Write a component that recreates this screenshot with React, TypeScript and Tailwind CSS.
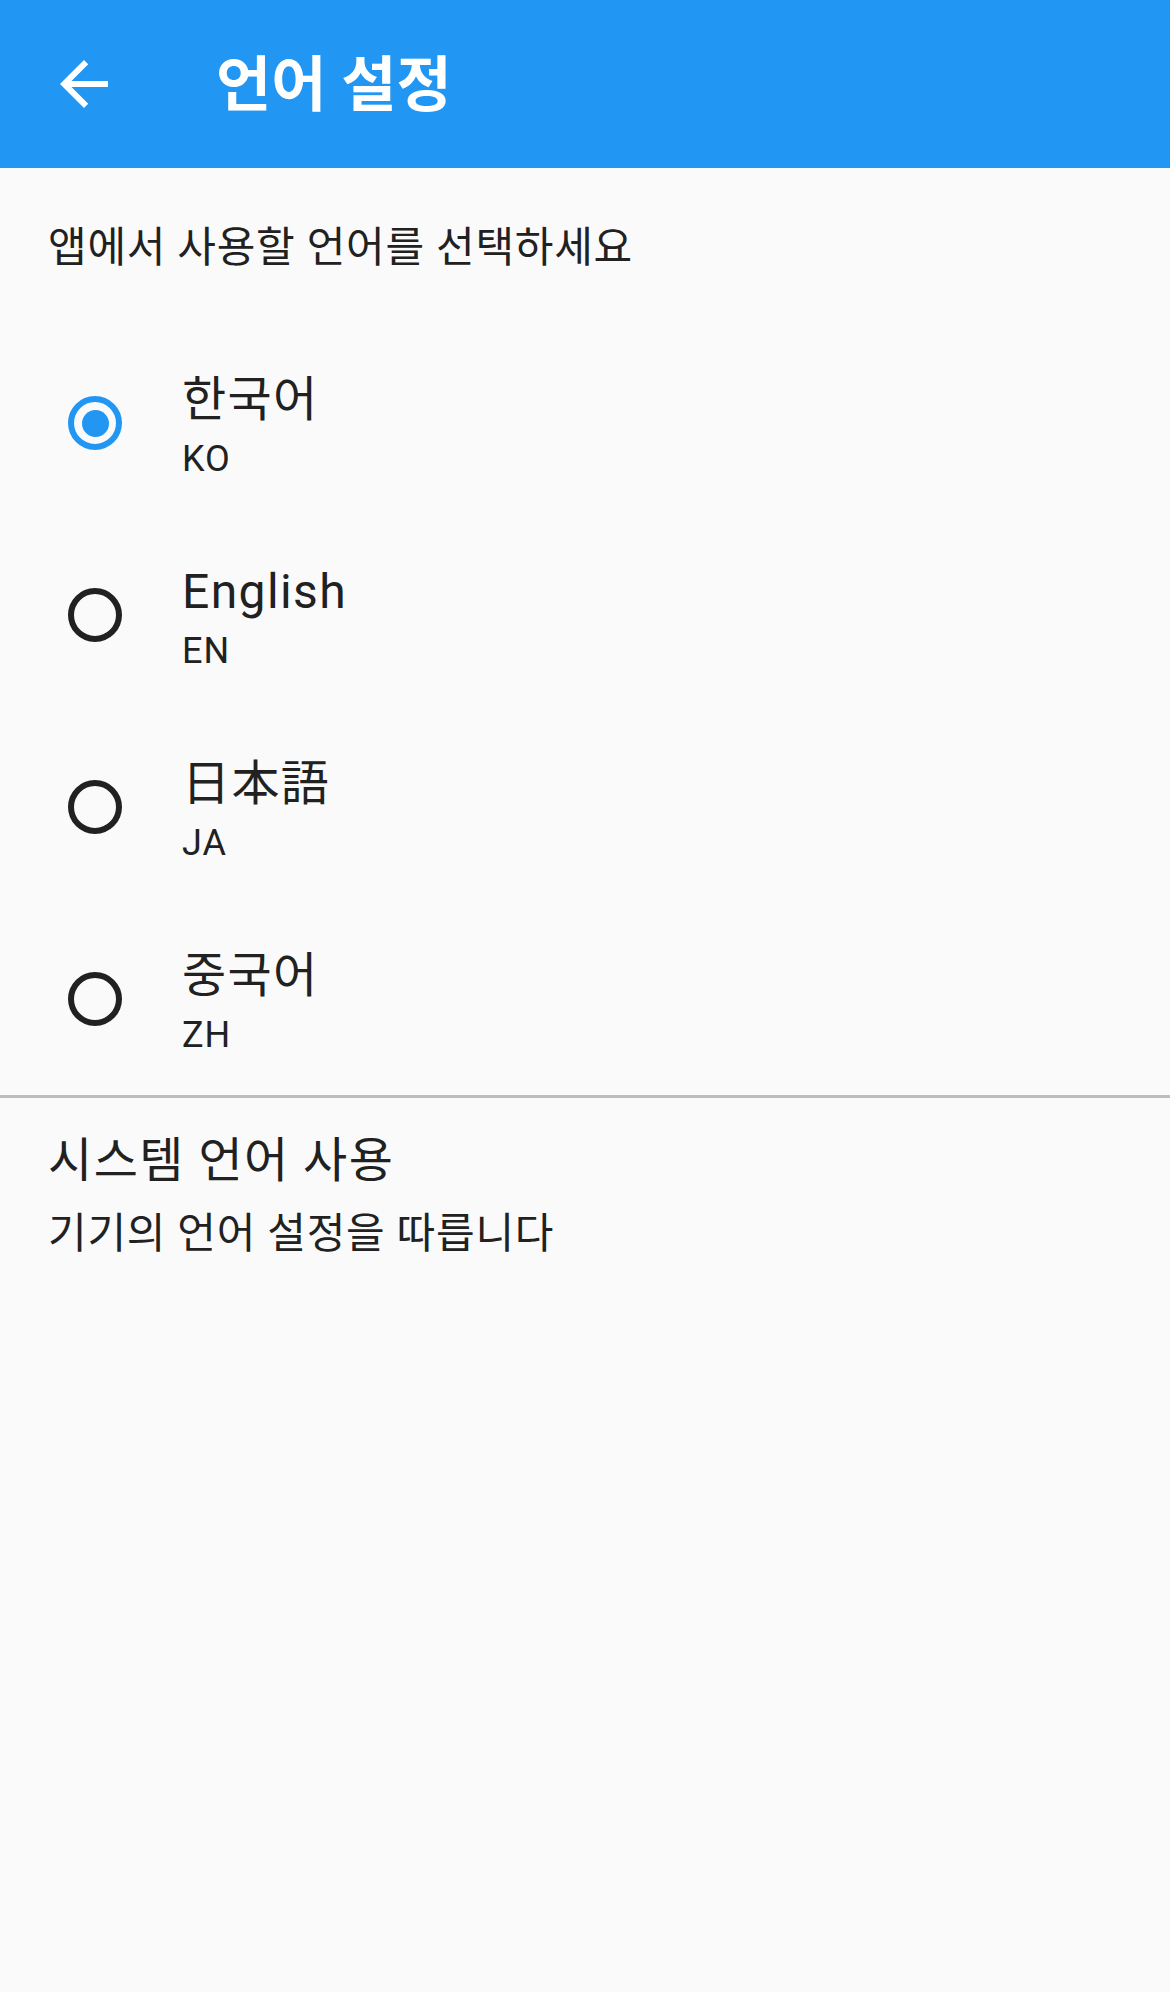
import React from "react";

const FONT = 'Roboto, "Noto Sans CJK KR", sans-serif';

type Lang = { name: string; code: string; jp?: boolean };

const langs: Lang[] = [
  { name: "한국어", code: "KO" },
  { name: "English", code: "EN" },
  { name: "日本語", code: "JA", jp: true },
  { name: "중국어", code: "ZH" },
];

function Radio({ checked }: { checked: boolean }) {
  if (checked) {
    return (
      <div className="w-[54px] h-[54px] rounded-full border-[6px] border-[#2196F3] flex items-center justify-center">
        <div className="w-[27px] h-[27px] rounded-full bg-[#2196F3]" />
      </div>
    );
  }
  return <div className="w-[54px] h-[54px] rounded-full border-[6px] border-[#212121]" />;
}

export default function App() {
  return (
    <div className="w-[1170px] min-h-[1992px] bg-[#fafafa] text-[#212121]" style={{ fontFamily: FONT }}>
      <header className="h-[168px] bg-[#2196F3] flex items-center">
        <div className="w-[168px] h-[168px] flex items-center justify-center">
          <svg width="72" height="72" viewBox="0 0 24 24" fill="#ffffff">
            <path d="M20 11H7.83l5.59-5.59L12 4l-8 8 8 8 1.41-1.41L7.83 13H20v-2z" />
          </svg>
        </div>
        <h1 className="ml-[48px] mt-[4px] text-[60px] font-bold text-white leading-none">언어 설정</h1>
      </header>

      <div className="h-[159px] px-[48px] flex items-center">
        <p className="text-[42px] leading-none tracking-[0.75px]">앱에서 사용할 언어를 선택하세요</p>
      </div>

      <div>
        {langs.map((l, i) => (
          <div key={l.code} className="h-[192px] flex items-center pl-[68px]">
            <Radio checked={i === 0} />
            <div className="ml-[60px] mt-[12px] flex flex-col">
              <span
                className="text-[48px] leading-[60px] tracking-[1.4px]"
                style={l.jp ? { fontFamily: 'Roboto, "Noto Sans CJK JP", sans-serif' } : undefined}
              >
                {l.name}
              </span>
              <span className="text-[36px] leading-[58px] tracking-[1px]">{l.code}</span>
            </div>
          </div>
        ))}
      </div>

      <div className="h-[3px] bg-[#bdbdbd]" />

      <div className="px-[48px] pt-[30px] flex flex-col">
        <span className="text-[48px] leading-[66px] tracking-[1.5px]">시스템 언어 사용</span>
        <span className="text-[42px] leading-[80px] tracking-[0.75px]">기기의 언어 설정을 따릅니다</span>
      </div>
    </div>
  );
}
